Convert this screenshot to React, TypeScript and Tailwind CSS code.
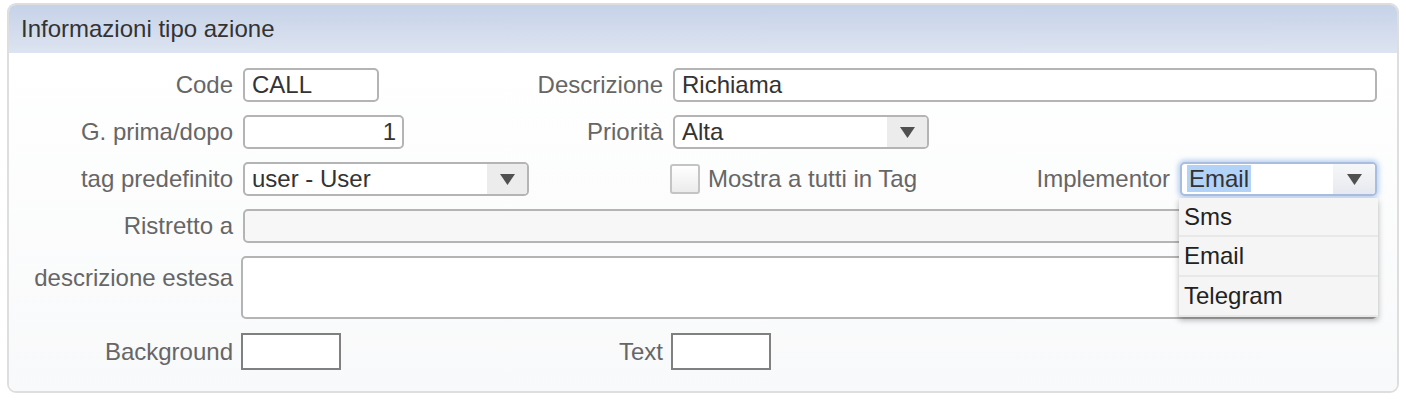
import React from 'react';

const font = { fontFamily: '"Liberation Sans", Arial, sans-serif' };

function Label({ children, className = '' }: { children: React.ReactNode; className?: string }) {
  return <div className={`shrink-0 text-right text-[#666] ${className}`}>{children}</div>;
}

function Arrow() {
  return (
    <div className="flex h-full w-[40px] items-center justify-center bg-[#ececec]">
      <svg width="15" height="11" viewBox="0 0 15 11">
        <path d="M0 0 L15 0 L7.5 11 Z" fill="#505050" />
      </svg>
    </div>
  );
}

function Select({ value, width }: { value: string; width: string }) {
  return (
    <div className={`flex h-[34px] items-center overflow-hidden rounded-[5px] border-2 border-[#b4b4b4] bg-white ${width}`}>
      <span className="flex-1 pl-[7px] text-[#333]">{value}</span>
      <Arrow />
    </div>
  );
}

export default function App() {
  return (
    <div className="bg-white px-[7px] pt-[3px] pb-[8px] text-[24px] leading-none" style={font}>
      <div className="overflow-hidden rounded-[9px] border-2 border-[#dedede]">
        <div className="flex h-[48px] items-center bg-gradient-to-b from-[#c6d2e8] to-[#dde4f1] pl-[12px] text-[24px] text-[#333]">
          Informazioni tipo azione
        </div>
        <div className="flex flex-col bg-gradient-to-b from-white to-[#f8f9fa] pt-[15px] pb-[21px] pr-[20px]">
          {/* row 1 */}
          <div className="flex items-center">
            <Label className="w-[234px] pr-[10px]">Code</Label>
            <div className="w-[289px]">
              <div className="flex h-[34px] w-[136px] items-center rounded-[5px] border-2 border-[#b4b4b4] bg-white pl-[7px] text-[#333]">CALL</div>
            </div>
            <Label className="w-[141px] pr-[10px]">Descrizione</Label>
            <div className="flex h-[34px] flex-1 items-center rounded-[5px] border-2 border-[#b4b4b4] bg-white pl-[7px] text-[#333]">Richiama</div>
          </div>

          {/* row 2 */}
          <div className="mt-[13px] flex items-center">
            <Label className="w-[234px] pr-[10px]">G. prima/dopo</Label>
            <div className="w-[289px]">
              <div className="flex h-[34px] w-[161px] items-center justify-end rounded-[5px] border-2 border-[#b4b4b4] bg-white pr-[6px] text-[#333]">1</div>
            </div>
            <Label className="w-[141px] pr-[10px]">Priorità</Label>
            <Select value="Alta" width="w-[256px]" />
          </div>

          {/* row 3 */}
          <div className="mt-[13px] flex items-center">
            <Label className="w-[234px] pr-[10px]">tag predefinito</Label>
            <div className="w-[289px]">
              <Select value="user - User" width="w-[286px]" />
            </div>
            <div className="ml-[138px] flex items-center gap-[8px]">
              <div className="h-[30px] w-[30px] rounded-[3px] border-2 border-[#c4c4c4] bg-gradient-to-b from-white to-[#ebebeb]" />
              <span className="text-[#666]">Mostra a tutti in Tag</span>
            </div>
            <div className="flex-1" />
            <span className="mr-[10px] text-[#666]">Implementor</span>
            <div className="relative">
              <div className="flex h-[34px] w-[197px] items-center overflow-hidden rounded-[5px] border-2 border-[#a9bedf] bg-white shadow-[0_0_5px_2px_rgba(130,170,230,0.55)]">
                <span className="flex-1 pl-[5px]">
                  <span className="bg-[#b3d2f7] px-[2px] text-[#333]">Email</span>
                </span>
                <div className="flex h-full w-[42px] items-center justify-center bg-gradient-to-b from-[#f6f7f9] to-[#e6e9ef]">
                  <svg width="15" height="11" viewBox="0 0 15 11">
                    <path d="M0 0 L15 0 L7.5 11 Z" fill="#505050" />
                  </svg>
                </div>
              </div>
              <div className="absolute top-[36px] left-[-1px] z-10 w-[199px] bg-[#f5f5f5] text-[#222] shadow-[0_3px_6px_rgba(0,0,0,0.3)]">
                <div className="flex h-[39px] items-center border-b-2 border-[#e8e8e8] pl-[5px]">Sms</div>
                <div className="flex h-[40px] items-center border-b-2 border-[#e8e8e8] pl-[5px]">Email</div>
                <div className="flex h-[40px] items-center border-b-2 border-[#e8e8e8] pl-[5px]">Telegram</div>
              </div>
            </div>
          </div>

          {/* row 4 */}
          <div className="mt-[13px] flex items-center">
            <Label className="w-[234px] pr-[10px]">Ristretto a</Label>
            <div className="h-[34px] flex-1 rounded-[5px] border-2 border-[#b4b4b4] bg-[#f7f7f7]" />
          </div>

          {/* row 5 */}
          <div className="mt-[13px] flex items-start">
            <Label className="w-[232px] pt-[10px] pr-[8px]">descrizione estesa</Label>
            <div className="h-[63px] flex-1 rounded-[5px] border-2 border-[#b4b4b4] bg-white" />
          </div>

          {/* row 6 */}
          <div className="mt-[14px] flex items-center">
            <Label className="w-[232px] pr-[8px]">Background</Label>
            <div className="w-[291px]">
              <div className="h-[37px] w-[100px] border-2 border-[#808080] bg-white" />
            </div>
            <Label className="w-[139px] pr-[8px]">Text</Label>
            <div className="h-[37px] w-[100px] border-2 border-[#808080] bg-white" />
          </div>
        </div>
      </div>
    </div>
  );
}
